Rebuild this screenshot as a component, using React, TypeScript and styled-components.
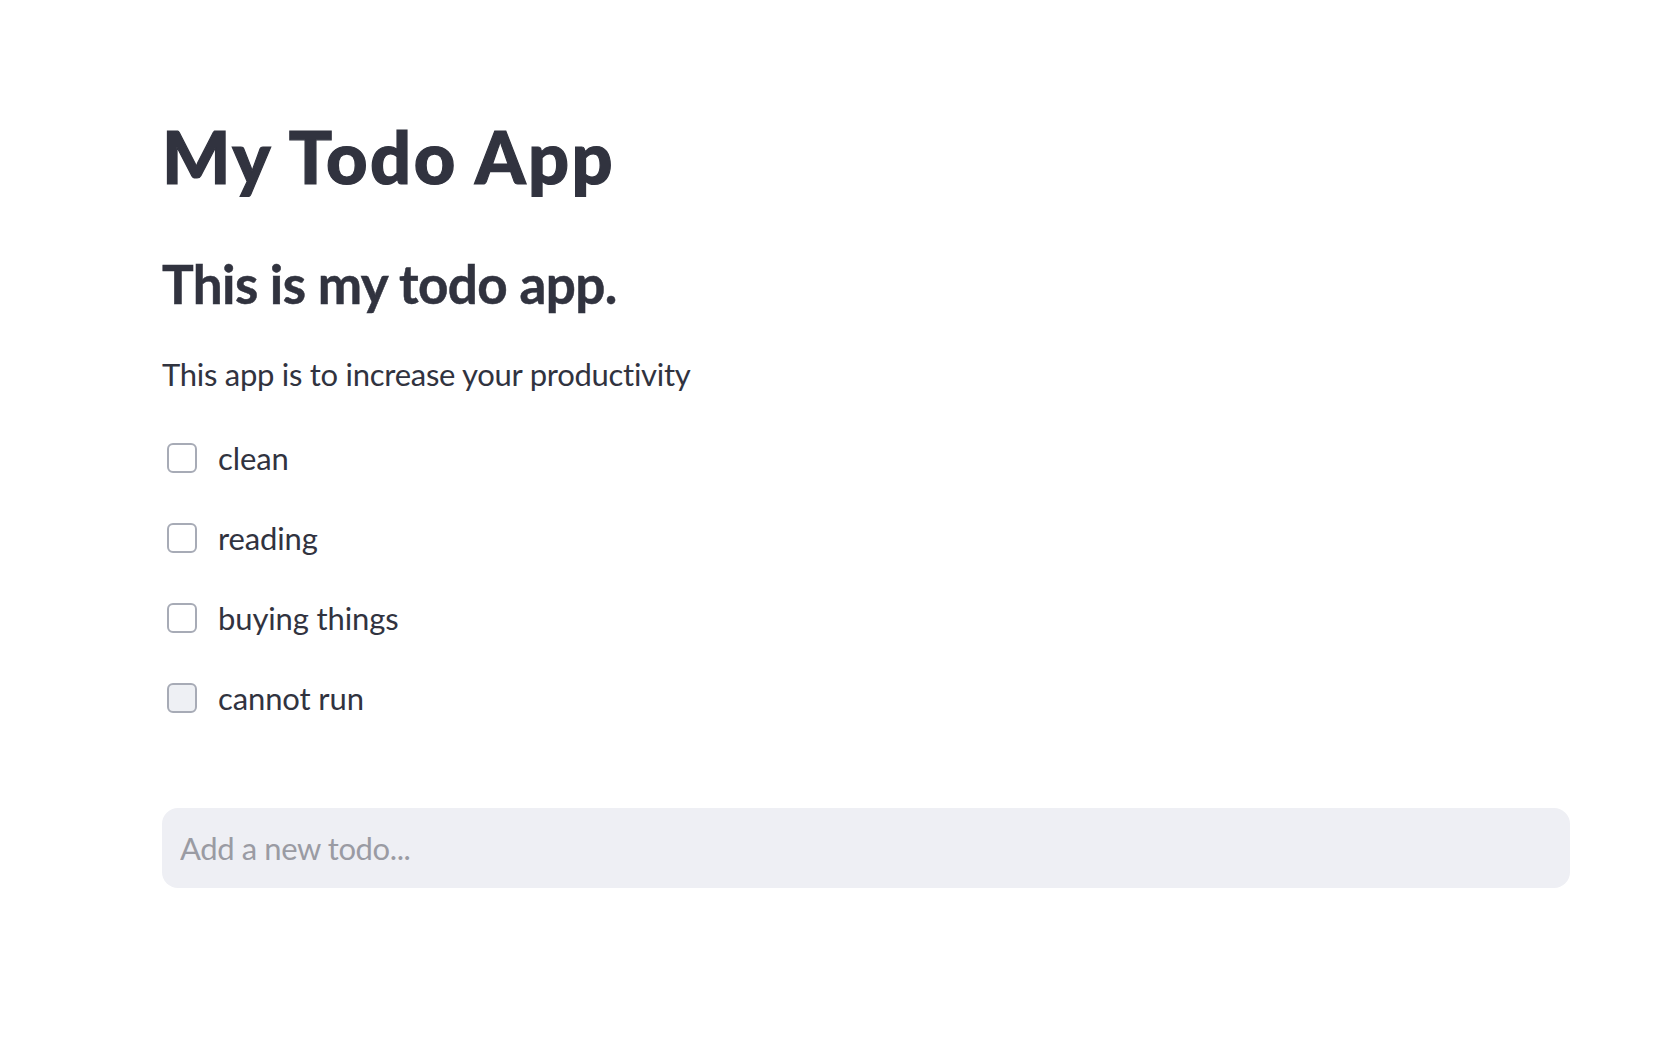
import { FC, useState } from 'react';
import styled, { createGlobalStyle } from 'styled-components';

const GlobalStyle = createGlobalStyle`
  html, body {
    margin: 0;
    padding: 0;
    background: #FFFFFF;
    font-family: Lato, "Noto Sans", sans-serif;
    color: #31333F;
  }
`;

const Page = styled.main`
  width: 1408px;
  padding: 113px 0 0 162px;
  display: flex;
  flex-direction: column;
`;

const Title = styled.h1`
  margin: 0;
  font-size: 72px;
  font-weight: 900;
  line-height: 1.2;
  letter-spacing: 2.5px;
  -webkit-text-stroke: 1.2px currentColor;
`;

const Subheader = styled.h3`
  margin: 53px 0 0;
  font-size: 53px;
  font-weight: 700;
  line-height: 1.2;
  letter-spacing: -0.6px;
  -webkit-text-stroke: 0.5px currentColor;
`;

const Text = styled.p`
  margin: 40px 0 0;
  font-size: 31px;
  font-weight: 400;
  line-height: 1.2;
  letter-spacing: -0.27px;
`;

const TodoList = styled.div`
  margin-top: 41px;
  display: flex;
  flex-direction: column;
  gap: 32px;
`;

const Row = styled.label`
  height: 48px;
  display: flex;
  align-items: center;
  gap: 21px;
  padding-left: 5px;
  font-size: 31px;
  letter-spacing: -0.12px;
  cursor: pointer;
`;

const Box = styled.span<{ $disabled?: boolean }>`
  width: 30px;
  height: 30px;
  box-sizing: border-box;
  border: 2px solid #A7ABB6;
  border-radius: 6px;
  background: ${({ $disabled }) => ($disabled ? '#EEF0F4' : '#FFFFFF')};
`;

const NewTodo = styled.input`
  margin-top: 86px;
  width: 1408px;
  height: 80px;
  box-sizing: border-box;
  border: none;
  outline: none;
  border-radius: 16px;
  background: #EEEFF4;
  padding: 0 18px;
  font-family: Lato, "Noto Sans", sans-serif;
  font-size: 31px;
  letter-spacing: -0.4px;
  color: #31333F;

  &::placeholder {
    color: #9A9BA3;
  }
`;

const todos = ['clean', 'reading', 'buying things', 'cannot run'];

const App: FC = () => {
  const [value, setValue] = useState('');

  return (
    <>
      <GlobalStyle />
      <Page>
        <Title>My Todo App</Title>
        <Subheader>This is my todo app.</Subheader>
        <Text>This app is to increase your productivity</Text>
        <TodoList>
          {todos.map((todo, i) => (
            <Row key={todo}>
              <Box $disabled={i === todos.length - 1} />
              {todo}
            </Row>
          ))}
        </TodoList>
        <NewTodo
          placeholder="Add a new todo..."
          value={value}
          onChange={(e) => setValue(e.target.value)}
        />
      </Page>
    </>
  );
};

export default App;
